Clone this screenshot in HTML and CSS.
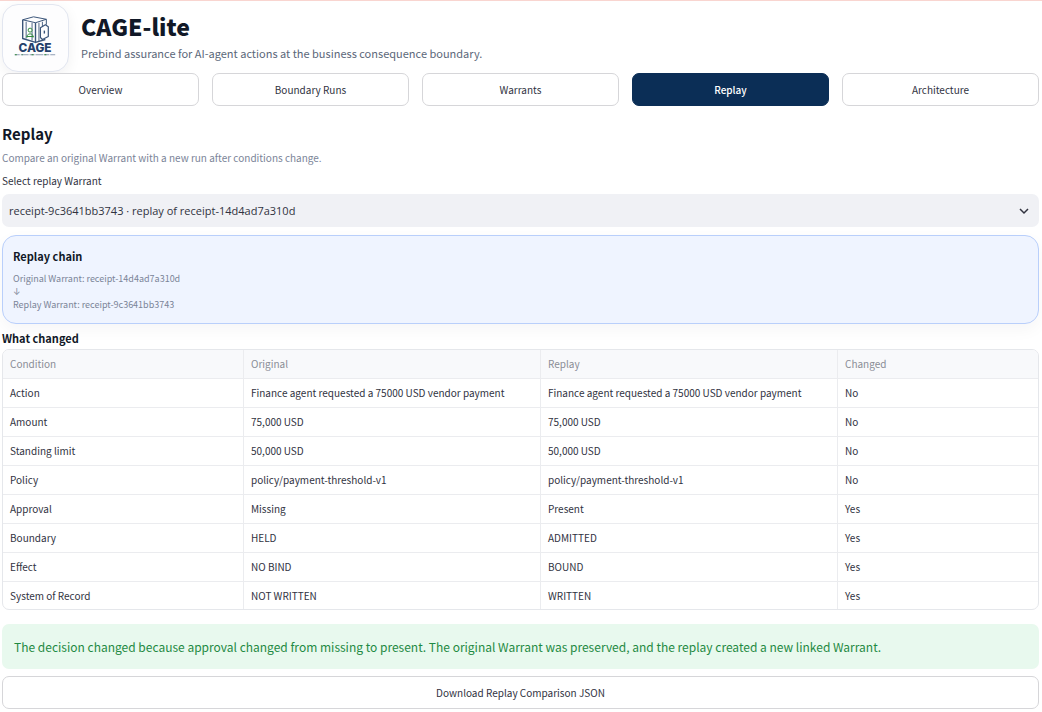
FILE: index.html
```html
<!DOCTYPE html>
<html lang="en">
<head>
    <meta charset="UTF-8">
    <meta name="viewport" content="width=device-width, initial-scale=1.0">
    <title>CAGE-lite</title>
    <link rel="stylesheet" href="styles.css">
</head>
<body>
    <header class="header">
        <div class="logo">
            <svg viewBox="0 0 66 66" role="img" aria-label="CAGE logo">
                <g fill="none" stroke="#3a5479" stroke-width="1" stroke-linejoin="round">
                    <path d="M20 15 L31 12 L44 14.500 L44 20 M20 15 L33 18 L44 14.500" />
                    <path d="M20 15 L20 34 L33 38 L33 18" stroke-width="1.400" />
                    <path d="M23.500 17 V34 M29.500 18 V36 M36.500 18 V37 M40 17 V22" stroke-width="0.900" />
                    <path d="M33 38 L43 35" stroke-width="1.400" />
                    <path d="M38 23 L43 20 L46 22 V32 L40 35 L38 33 Z" stroke-width="1.200" fill="#fdfdfe" />
                    <path d="M42 26 V29" stroke-width="1.400" />
                </g>
                <circle cx="27.500" cy="25.500" r="2" fill="#fdfdfe" stroke="#2f8a3a" />
                <path d="M24.500 33 V31 Q27.500 27.500 30.500 31 V33 M24 32 H31" fill="none" stroke="#2f8a3a" />
                <text class="logo-name" x="32.500" y="48" text-anchor="middle">CAGE</text>
                <path d="M12 50.500 H53" stroke="#24406b" stroke-dasharray="5 1 8 1" opacity="0.500" />
                <path d="M12 50.500 H14 M19 50.500 H20 M29 50.500 H31 M42 50.500 H44" stroke="#2f8a3a" />
            </svg>
        </div>
        <div>
            <h1>CAGE-lite</h1>
            <p class="tagline">Prebind assurance for AI-agent actions at the business consequence boundary.</p>
        </div>
    </header>

    <nav class="tabs">
        <button type="button">Overview</button>
        <button type="button">Boundary Runs</button>
        <button type="button">Warrants</button>
        <button type="button" class="active">Replay</button>
        <button type="button">Architecture</button>
    </nav>

    <main>
        <h2>Replay</h2>
        <p class="caption">Compare an original Warrant with a new run after conditions change.</p>

        <label for="warrant">Select replay Warrant</label>
        <div class="select-box">
            <select id="warrant" name="warrant">
                <option>receipt-9c3641bb3743 · replay of receipt-14d4ad7a310d</option>
            </select>
            <svg class="chevron" viewBox="0 0 10 10" aria-hidden="true">
                <path d="M1 3 L5 7 L9 3" fill="none" stroke="#31333f" stroke-width="1.500" />
            </svg>
        </div>

        <section class="chain">
            <h3>Replay chain</h3>
            <p>Original Warrant: receipt-14d4ad7a310d<br><span class="arrow">↓</span><br>Replay Warrant: receipt-9c3641bb3743</p>
        </section>

        <h3>What changed</h3>
        <div class="table-box">
            <table>
                <colgroup>
                    <col class="col-condition">
                    <col class="col-run">
                    <col class="col-run">
                    <col>
                </colgroup>
                <thead>
                    <tr><th>Condition</th><th>Original</th><th>Replay</th><th>Changed</th></tr>
                </thead>
                <tbody>
                    <tr><td>Action</td><td>Finance agent requested a 75000 USD vendor payment</td><td>Finance agent requested a 75000 USD vendor payment</td><td>No</td></tr>
                    <tr><td>Amount</td><td>75,000 USD</td><td>75,000 USD</td><td>No</td></tr>
                    <tr><td>Standing limit</td><td>50,000 USD</td><td>50,000 USD</td><td>No</td></tr>
                    <tr><td>Policy</td><td>policy/payment-threshold-v1</td><td>policy/payment-threshold-v1</td><td>No</td></tr>
                    <tr><td>Approval</td><td>Missing</td><td>Present</td><td>Yes</td></tr>
                    <tr><td>Boundary</td><td>HELD</td><td>ADMITTED</td><td>Yes</td></tr>
                    <tr><td>Effect</td><td>NO BIND</td><td>BOUND</td><td>Yes</td></tr>
                    <tr><td>System of Record</td><td>NOT WRITTEN</td><td>WRITTEN</td><td>Yes</td></tr>
                </tbody>
            </table>
        </div>

        <p class="success">The decision changed because approval changed from missing to present. The original Warrant was preserved, and the replay created a new linked Warrant.</p>
        <button type="button" class="download">Download Replay Comparison JSON</button>
    </main>
</body>
</html>
```

FILE: styles.css
```css
* {
    box-sizing: border-box;
}

body {
    font-family: "Noto Sans CJK SC", "Noto Sans", sans-serif;
    font-size: 10px;
    line-height: 20px;
    color: #31333f;
    background-color: #fff;
    border-top: 1px solid #f9d5d0;
    margin: 0;
    padding: 3px 3px 0 2px;
}

h1, h2, h3, p {
    margin: 0;
    color: #111827;
}

h1 {
    font-size: 23px;
    line-height: 34px;
    font-weight: 900;
}

h2 {
    font-size: 15px;
    line-height: 24px;
    margin-top: 16px;
}

h3 {
    font-size: 11px;
    line-height: 20px;
}

.header {
    display: flex;
    gap: 12px;
}

.header h1 {
    margin-top: 5px;
}

.header .tagline {
    font-size: 11px;
    color: #5b6779;
}

.logo {
    width: 67px;
    height: 68px;
    border: 1px solid #e2e6f0;
    border-radius: 16px;
    background-color: #fdfdfe;
    box-shadow: 0 4px 14px rgba(15, 23, 42, 0.06);
}

.logo svg {
    display: block;
    width: 100%;
}

.logo-name {
    font-family: Inter, sans-serif;
    font-size: 12px;
    font-weight: 800;
    fill: #24406b;
}

.tabs {
    display: grid;
    grid-template-columns: repeat(5, 1fr);
    gap: 13px;
    margin-top: 1px;
}

button {
    font: inherit;
    color: #31333f;
    height: 33px;
    background-color: #fff;
    border: 1px solid #d6d6d9;
    border-radius: 7px;
    cursor: pointer;
}

button.active {
    color: #fff;
    font-weight: 500;
    background-color: #0b2e56;
    border-color: #0b2e56;
}

.caption {
    line-height: 24px;
    color: #7b8498;
}

label {
    display: block;
    line-height: 22px;
    margin-bottom: 2px;
}

.select-box {
    display: grid;
    align-items: center;
}

.select-box > * {
    grid-area: 1 / 1;
}

select {
    appearance: none;
    width: 100%;
    height: 33px;
    padding: 0 7px;
    font-family: "Open Sans", sans-serif;
    font-size: 11px;
    color: #31333f;
    background-color: #f0f1f5;
    border: none;
    border-radius: 7px;
}

.chevron {
    justify-self: end;
    width: 10px;
    height: 10px;
    margin-right: 10px;
    pointer-events: none;
}

.chain {
    margin: 8px 0 4px;
    padding: 10px 10px 12px;
    background-color: #eff4ff;
    border: 1px solid #b9cffb;
    border-radius: 14px;
    box-shadow: 0 6px 16px rgba(15, 23, 42, 0.04);
}

.chain p {
    font-size: 9px;
    line-height: 13px;
    margin-top: 6px;
    color: #7b8498;
}

.arrow {
    font-family: Inter, sans-serif;
}

.table-box {
    margin-top: 1px;
    border: 1px solid #e5e7eb;
    border-radius: 7px;
    overflow: hidden;
}

table {
    width: 100%;
    table-layout: fixed;
    border-collapse: separate;
    border-spacing: 0;
}

.col-condition {
    width: 241px;
}

.col-run {
    width: 297px;
}

th, td {
    height: 29px;
    padding: 0 7px;
    font-weight: 400;
    text-align: left;
    border-right: 1px solid #ebecef;
    border-bottom: 1px solid #ebecef;
}

th {
    color: #8a8d96;
    background-color: #f8f9fb;
}

th:last-child, td:last-child {
    border-right: none;
}

tr:last-child td {
    height: 27px;
}

tbody tr:last-child td {
    border-bottom: none;
}

.success {
    margin: 14px 0 7px;
    padding: 12px;
    font-size: 12px;
    line-height: 21px;
    color: #1f8a43;
    background-color: #e8f9ee;
    border-radius: 7px;
}

.download {
    display: block;
    width: 100%;
}
```
